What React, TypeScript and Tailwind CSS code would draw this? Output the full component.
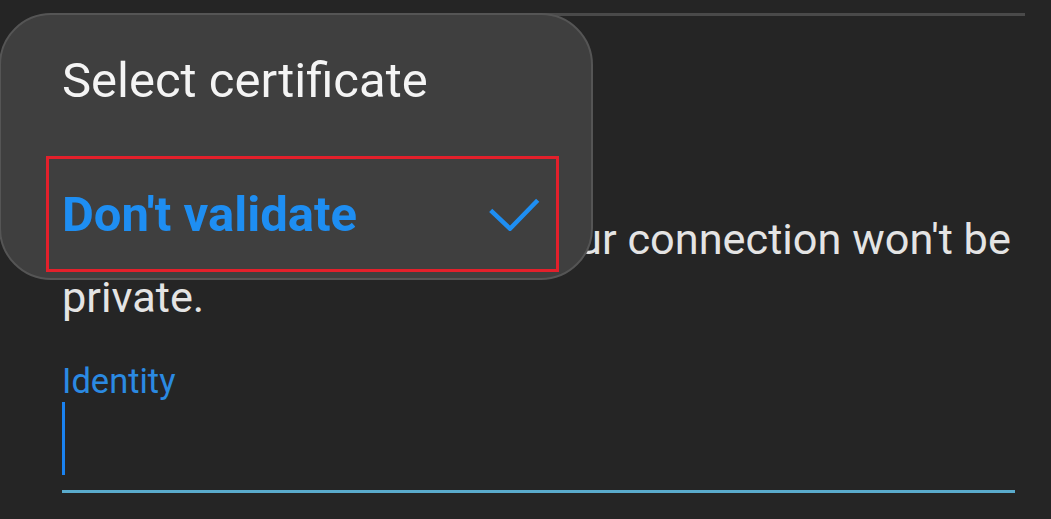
import React from "react";

export default function App() {
  return (
    <div className="relative w-[1051px] h-[519px] overflow-hidden bg-[#252525] font-['Roboto','Noto_Sans',sans-serif]">
      <div className="pl-[62px] pr-[26px] pt-[13px]">
        <div className="h-[3px] bg-[#4a4a4a]" />
        <p className="mt-[195px] text-[43.3px] leading-[58px] text-[#e4e4e4]">
          No certificate specified. Your connection won't be private.
        </p>
        <div className="mt-[34px] text-[34.5px] leading-[40px] text-[#2b8ae2]">Identity</div>
        <div className="mt-[1px] h-[73px] w-[3px] bg-[#1a82f0]" />
        <div className="mt-[15px] mr-[10px] h-[3px] bg-[#5aabcc]" />
      </div>

      <div className="absolute left-[-1px] top-[13px] h-[267px] w-[594px] rounded-[52px] border-2 border-[#555555] bg-[#3f3f3f]">
        <div className="pl-[61px] pt-[37px] text-[49px] leading-[58px] text-[#f4f4f4]">
          Select certificate
        </div>
      </div>

      <div className="absolute left-[46px] top-[156px] flex h-[116px] w-[513px] items-center justify-between border-[3px] border-[#e3202b] pl-[13px] pr-[16px]">
        <span className="text-[49px] font-bold leading-[49px] text-[#1e8ef2]">Don't validate</span>
        <svg width="52" height="33" viewBox="0 0 52 33" fill="none">
          <polyline points="2.7,12.3 22,30.7 49.7,2.3" stroke="#1e8ef2" strokeWidth="4.5" fill="none" />
        </svg>
      </div>
    </div>
  );
}
